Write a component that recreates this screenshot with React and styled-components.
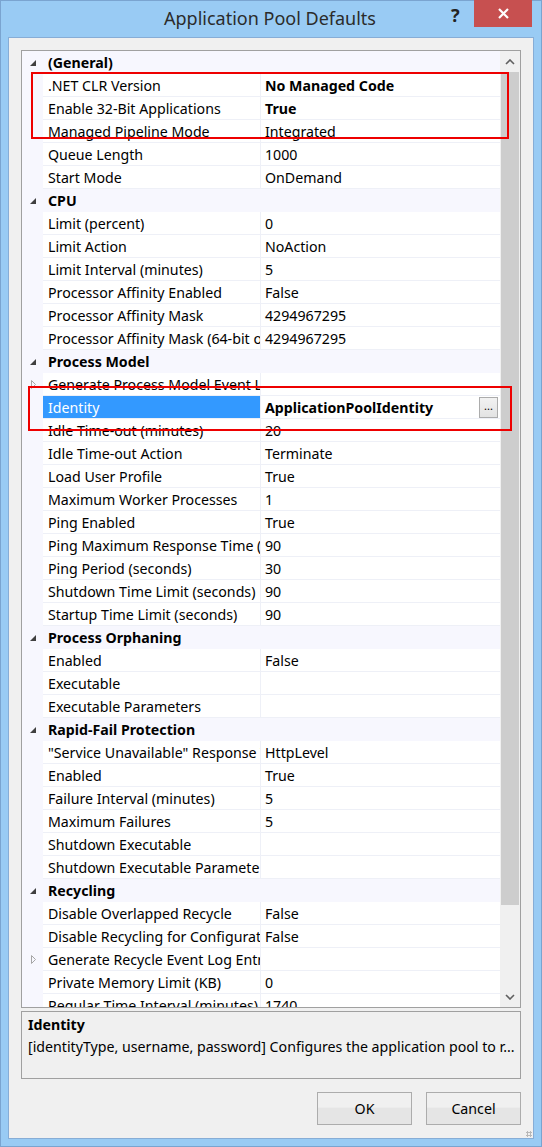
import styled, { createGlobalStyle } from "styled-components";

const GlobalStyle = createGlobalStyle`
  html, body {
    margin: 0;
    padding: 0;
    background: #ffffff;
  }
  body {
    font-family: "Noto Sans", "Open Sans", sans-serif;
    font-size: 14.2px;
    color: #000;
  }
`;

const sections = [
  {
    name: "(General)",
    rows: [
      { label: ".NET CLR Version", value: "No Managed Code", bold: true },
      { label: "Enable 32-Bit Applications", value: "True", bold: true },
      { label: "Managed Pipeline Mode", value: "Integrated" },
      { label: "Queue Length", value: "1000" },
      { label: "Start Mode", value: "OnDemand" },
    ],
  },
  {
    name: "CPU",
    rows: [
      { label: "Limit (percent)", value: "0" },
      { label: "Limit Action", value: "NoAction" },
      { label: "Limit Interval (minutes)", value: "5" },
      { label: "Processor Affinity Enabled", value: "False" },
      { label: "Processor Affinity Mask", value: "4294967295" },
      { label: "Processor Affinity Mask (64-bit option)", value: "4294967295" },
    ],
  },
  {
    name: "Process Model",
    rows: [
      { label: "Generate Process Model Event Log Entry", value: "", expandable: true },
      { label: "Identity", value: "ApplicationPoolIdentity", bold: true, selected: true, browse: true },
      { label: "Idle Time-out (minutes)", value: "20" },
      { label: "Idle Time-out Action", value: "Terminate" },
      { label: "Load User Profile", value: "True" },
      { label: "Maximum Worker Processes", value: "1" },
      { label: "Ping Enabled", value: "True" },
      { label: "Ping Maximum Response Time (seconds)", value: "90" },
      { label: "Ping Period (seconds)", value: "30" },
      { label: "Shutdown Time Limit (seconds)", value: "90" },
      { label: "Startup Time Limit (seconds)", value: "90" },
    ],
  },
  {
    name: "Process Orphaning",
    rows: [
      { label: "Enabled", value: "False" },
      { label: "Executable", value: "" },
      { label: "Executable Parameters", value: "" },
    ],
  },
  {
    name: "Rapid-Fail Protection",
    rows: [
      { label: "\"Service Unavailable\" Response Type", value: "HttpLevel" },
      { label: "Enabled", value: "True" },
      { label: "Failure Interval (minutes)", value: "5" },
      { label: "Maximum Failures", value: "5" },
      { label: "Shutdown Executable", value: "" },
      { label: "Shutdown Executable Parameters", value: "" },
    ],
  },
  {
    name: "Recycling",
    rows: [
      { label: "Disable Overlapped Recycle", value: "False" },
      { label: "Disable Recycling for Configuration Changes", value: "False" },
      { label: "Generate Recycle Event Log Entry", value: "", expandable: true },
      { label: "Private Memory Limit (KB)", value: "0" },
      { label: "Regular Time Interval (minutes)", value: "1740" },
    ],
  },
];

const CollapseArrow = () => (
  <svg width="6" height="6" viewBox="0 0 6 6">
    <path d="M6 0 L6 6 L0 6 Z" fill="#404040" />
  </svg>
);

const ExpandArrow = () => (
  <svg width="5" height="9" viewBox="0 0 5 9">
    <path d="M0.5 0.5 L4.5 4.5 L0.5 8.5 Z" fill="none" stroke="#a6a6a6" strokeWidth="1" />
  </svg>
);

const Chevron = ({ down }) => (
  <svg width="10" height="6" viewBox="0 0 10 6">
    <path
      d={down ? "M1 1 L5 5 L9 1" : "M1 5 L5 1 L9 5"}
      fill="none"
      stroke="#606060"
      strokeWidth="1.6"
    />
  </svg>
);

const App = () => {
  return (
    <>
      <GlobalStyle />
      <Window>
        <TitleBar>
          <Title>Application Pool Defaults</Title>
          <HelpButton>?</HelpButton>
          <CloseButton>
            <svg width="11" height="11" viewBox="0 0 11 11">
              <path d="M1 1 L10 10 M10 1 L1 10" stroke="#fff" strokeWidth="2.2" />
            </svg>
          </CloseButton>
        </TitleBar>
        <Client>
          <Grid>
            <List>
              {sections.map(section => (
                <div key={section.name}>
                  <CategoryRow>
                    <Gutter>
                      <CollapseArrow />
                    </Gutter>
                    <CategoryName>{section.name}</CategoryName>
                  </CategoryRow>
                  {section.rows.map(row => (
                    <Row key={section.name + row.label}>
                      <Gutter>{row.expandable && <ExpandArrow />}</Gutter>
                      <Label selected={row.selected}>{row.label}</Label>
                      <Value bold={row.bold}>
                        <span>{row.value}</span>
                        {row.browse && <BrowseButton>...</BrowseButton>}
                      </Value>
                    </Row>
                  ))}
                </div>
              ))}
            </List>
            <ScrollBar>
              <ScrollArrow>
                <Chevron />
              </ScrollArrow>
              <Track>
                <Thumb />
              </Track>
              <ScrollArrow>
                <Chevron down />
              </ScrollArrow>
            </ScrollBar>
          </Grid>
          <Description>
            <DescTitle>Identity</DescTitle>
            <DescText>
              [identityType, username, password] Configures the application pool to r...
            </DescText>
          </Description>
          <ButtonBar>
            <DialogButton>OK</DialogButton>
            <DialogButton>Cancel</DialogButton>
          </ButtonBar>
          <Highlight top={71} left={30} width={478} height={67} />
          <Highlight top={385} left={27} width={484} height={45} />
          <Grip />
        </Client>
      </Window>
    </>
  );
};

const Window = styled.div`
  width: 542px;
  height: 1147px;
  box-sizing: border-box;
  background: #99cbf4;
  border: 1px solid #7aa4d0;
  display: flex;
  flex-direction: column;
`;

const TitleBar = styled.div`
  position: relative;
  height: 36px;
  flex: none;
  display: flex;
  align-items: center;
  justify-content: center;
`;

const Title = styled.div`
  font-family: "Noto Sans", sans-serif;
  font-size: 18px;
  color: #2b2b2b;
  margin-top: -2px;
  margin-left: -2px;
`;

const HelpButton = styled.div`
  position: absolute;
  left: 450px;
  top: 2px;
  font-family: "Noto Sans", sans-serif;
  font-weight: 700;
  font-size: 18px;
  color: #222;
`;

const CloseButton = styled.div`
  position: absolute;
  right: 9px;
  top: -1px;
  width: 58px;
  height: 27px;
  background: #c75050;
  display: flex;
  align-items: center;
  justify-content: center;
`;

const Client = styled.div`
  position: relative;
  flex: 1;
  margin: 0 7px 7px 7px;
  border: 1px solid #87add6;
  background: #f0f0f0;
  padding: 12px 12px 13px 12px;
  display: flex;
  flex-direction: column;
`;

const Grid = styled.div`
  height: 958px;
  box-sizing: border-box;
  border: 1px solid #a0a0a0;
  background: #fff;
  display: flex;
  overflow: hidden;
`;

const List = styled.div`
  flex: 1;
  overflow: hidden;
`;

const Row = styled.div`
  height: 23px;
  display: flex;
`;

const CategoryRow = styled(Row)`
  background: #f7f7fe;
`;

const Gutter = styled.div`
  width: 21px;
  flex: none;
  background: #f7f7fe;
  display: flex;
  align-items: center;
  justify-content: center;
  padding-left: 1px;
  box-sizing: border-box;
`;

const CategoryName = styled.div`
  padding: 1px 0 0 5px;
  line-height: 22px;
  font-weight: 700;
  white-space: nowrap;
`;

const Label = styled.div`
  width: 218px;
  flex: none;
  box-sizing: border-box;
  padding: 1px 0 0 5px;
  line-height: 22px;
  white-space: nowrap;
  overflow: hidden;
  border-right: 1px solid #eef0f7;
  border-bottom: 1px solid #eef0f7;
  background: ${props => (props.selected ? "#3399ff" : "#ffffff")};
  color: ${props => (props.selected ? "#ffffff" : "#000000")};
`;

const Value = styled.div`
  flex: 1;
  min-width: 0;
  padding: 1px 2px 0 4px;
  line-height: 22px;
  white-space: nowrap;
  overflow: hidden;
  border-bottom: 1px solid #eef0f7;
  font-weight: ${props => (props.bold ? 700 : 400)};
  display: flex;
  align-items: center;
  justify-content: space-between;
`;

const BrowseButton = styled.div`
  width: 17px;
  height: 19px;
  margin-top: -1px;
  border: 1px solid #acacac;
  background: linear-gradient(#f2f2f2, #e3e3e3);
  font-weight: 400;
  font-size: 11px;
  line-height: 16px;
  text-align: center;
  color: #000;
`;

const ScrollBar = styled.div`
  width: 20px;
  flex: none;
  background: #f0f0f0;
  display: flex;
  flex-direction: column;
`;

const ScrollArrow = styled.div`
  height: 21px;
  flex: none;
  display: flex;
  align-items: center;
  justify-content: center;
`;

const Track = styled.div`
  flex: 1;
  padding: 0 1px;
`;

const Thumb = styled.div`
  height: 833px;
  background: #cdcdcd;
`;

const Description = styled.div`
  margin-top: 3px;
  height: 68px;
  box-sizing: border-box;
  border: 1px solid #a0a0a0;
  padding: 2px 6px;
  overflow: hidden;
`;

const DescTitle = styled.div`
  font-weight: 700;
  line-height: 22px;
`;

const DescText = styled.div`
  line-height: 22px;
  white-space: nowrap;
`;

const ButtonBar = styled.div`
  margin-top: 13px;
  display: flex;
  justify-content: flex-end;
  gap: 14px;
`;

const DialogButton = styled.div`
  width: 95px;
  height: 33px;
  box-sizing: border-box;
  border: 1px solid #acacac;
  background: linear-gradient(#f0f0f0 0%, #f0f0f0 45%, #e5e5e5 50%, #e5e5e5 100%);
  display: flex;
  align-items: center;
  justify-content: center;
  font-size: 14.2px;
`;

const Highlight = styled.div`
  position: absolute;
  top: ${props => props.top - 37}px;
  left: ${props => props.left - 8}px;
  width: ${props => props.width}px;
  height: ${props => props.height}px;
  border: 2px solid #ee0000;
  box-sizing: border-box;
  pointer-events: none;
`;

const Grip = styled.div`
  position: absolute;
  right: 1px;
  bottom: 1px;
  width: 6px;
  height: 6px;
  background: radial-gradient(circle, #b8b8b8 1px, transparent 1.2px) 0 0 / 3px 3px;
`;

export default App;
